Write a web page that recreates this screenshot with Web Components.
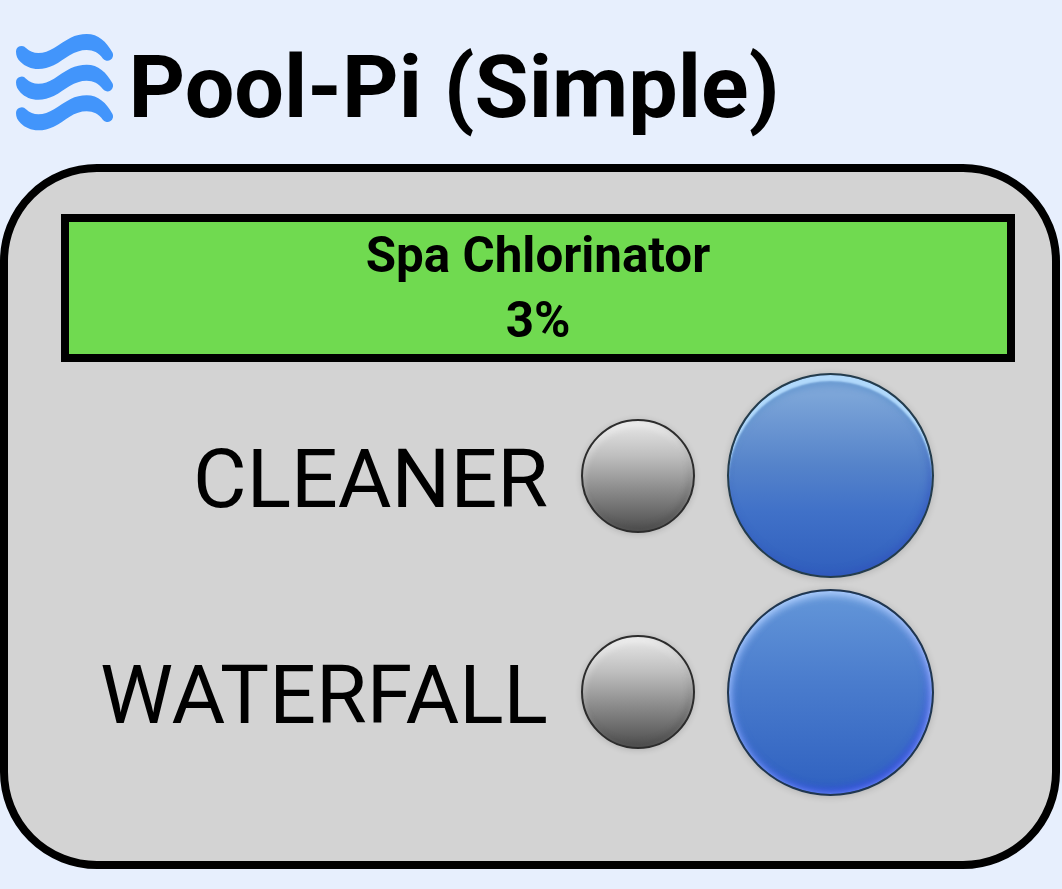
<!DOCTYPE html>
<html lang="en">
<head>
<meta charset="utf-8">
<title>Pool-Pi (Simple)</title>
<style>
  html, body { margin: 0; height: 100%; }
  body { background: #e7effd; color: #000; font-family: Roboto, "Liberation Sans", sans-serif; overflow: hidden; }
</style>
</head>
<body>
<pool-app></pool-app>
<script>
const define = (name, html) => {
  customElements.define(name, class extends HTMLElement {
    constructor() {
      super();
      const t = document.createElement('template');
      t.innerHTML = html;
      this.attachShadow({ mode: 'open' }).append(t.content.cloneNode(true));
    }
  });
};

define('wave-logo', `
  <style>:host{display:block;width:97px;height:97px} svg{display:block}</style>
  <svg width="97" height="97" viewBox="18 18 291 291" fill="#4295fb">
    <defs><path id="w" d="M48 60C59 70 71 75 85 75C101 75 117 69 132 60C148 50 164 38 182 29C197 22 213 18 230 18C265 18 289 41 307 73A17 17 0 0 1 279 92C266 74 250 66 230 66C212 66 196 72 179 82C163 92 149 103 131 112C116 119 101 123 85 123C63 123 45 115 32 102C22 92 18 83 18 71A17 17 0 0 1 48 60Z"/></defs>
    <use href="#w"/><use href="#w" y="92"/><use href="#w" y="184"/>
  </svg>`);

define('page-title', `
  <style>
    :host{display:flex;align-items:center;gap:15.5px;height:164px;padding-left:16px;box-sizing:border-box}
    h1{margin:9px 0 0;font-size:88px;font-weight:700;line-height:104px;white-space:nowrap}
  </style>
  <wave-logo></wave-logo><h1><slot></slot></h1>`);

define('lcd-display', `
  <style>
    :host{display:flex;flex-direction:column;align-items:center;box-sizing:border-box;width:954px;height:148px;padding-top:1px;
      border:8px solid #000;background:#70da50;font-size:49.3px;font-weight:700;line-height:65px;text-align:center;white-space:pre}
  </style><slot></slot>`);

define('status-led', `
  <style>
    :host{display:block;box-sizing:border-box;width:114px;height:114px;border:2px solid #2c2c2c;border-radius:50%;
      background:linear-gradient(#e4e4e4 3%,#bebebe 32%,#8c8c8c 62%,#4e4e4e);
      box-shadow:inset 0 5px 7px rgba(255,255,255,.4),inset -3px -3px 6px rgba(70,70,70,.4),0 1px 6px rgba(0,0,0,.16)}
  </style>`);

define('push-button', `
  <style>
    :host{display:block;width:207px;height:207px}
    button{display:block;box-sizing:border-box;width:100%;height:100%;padding:0;border:2px solid #20364f;border-radius:50%;
      background:linear-gradient(#6497d9,#4a7ccd 45%,#2f61c0);
      box-shadow:inset 0 4px 8px rgba(194,222,255,.85),inset 2px 0 8px rgba(110,155,255,.6),inset -3px -4px 9px rgba(55,65,235,.75),0 1px 7px rgba(0,0,0,.16)}
    :host([lit]){height:205px}
    :host([lit]) button{border-color:#243c4c;
      background:linear-gradient(#7ca5d8 10%,#5583ca 45%,#4071c8 68%,#305fbd);
      box-shadow:inset 0 7px 2px -1px #b1d9fb,inset 0 13px 5px -2px rgba(100,151,207,.65),inset -3px -3px 7px rgba(50,80,190,.5),0 1px 7px rgba(0,0,0,.16)}
  </style><button></button>`);

define('control-row', `
  <style>
    :host{display:grid;grid-template-columns:540px 114px 207px;grid-template-rows:206px;column-gap:33px;align-items:center;height:206px}
    ::slotted(push-button){margin-left:-1px;align-self:start}
    .label{font-size:82.4px;line-height:94px;text-align:right;margin-top:5px;white-space:nowrap}
  </style>
  <div class="label"><slot></slot></div><status-led></status-led><slot name="button"></slot>`);

define('control-panel', `
  <style>
    :host{display:flex;flex-direction:column;box-sizing:border-box;width:1060px;height:705px;border:8px solid #000;
      border-radius:97px;background:#d3d3d3;padding-top:42px}
    .display{padding-left:53px}
    .rows{display:flex;flex-direction:column;gap:10px;padding-top:11px}
  </style>
  <div class="display"><slot name="display"></slot></div><div class="rows"><slot></slot></div>`);

define('pool-app', `
  <style>:host{display:block}</style>
  <page-title>Pool-Pi (Simple)</page-title>
  <control-panel>
    <lcd-display slot="display"><div>Spa Chlorinator</div><div>3%</div></lcd-display>
    <control-row>CLEANER<push-button slot="button" lit></push-button></control-row>
    <control-row>WATERFALL<push-button slot="button"></push-button></control-row>
  </control-panel>`);
</script>
</body>
</html>
